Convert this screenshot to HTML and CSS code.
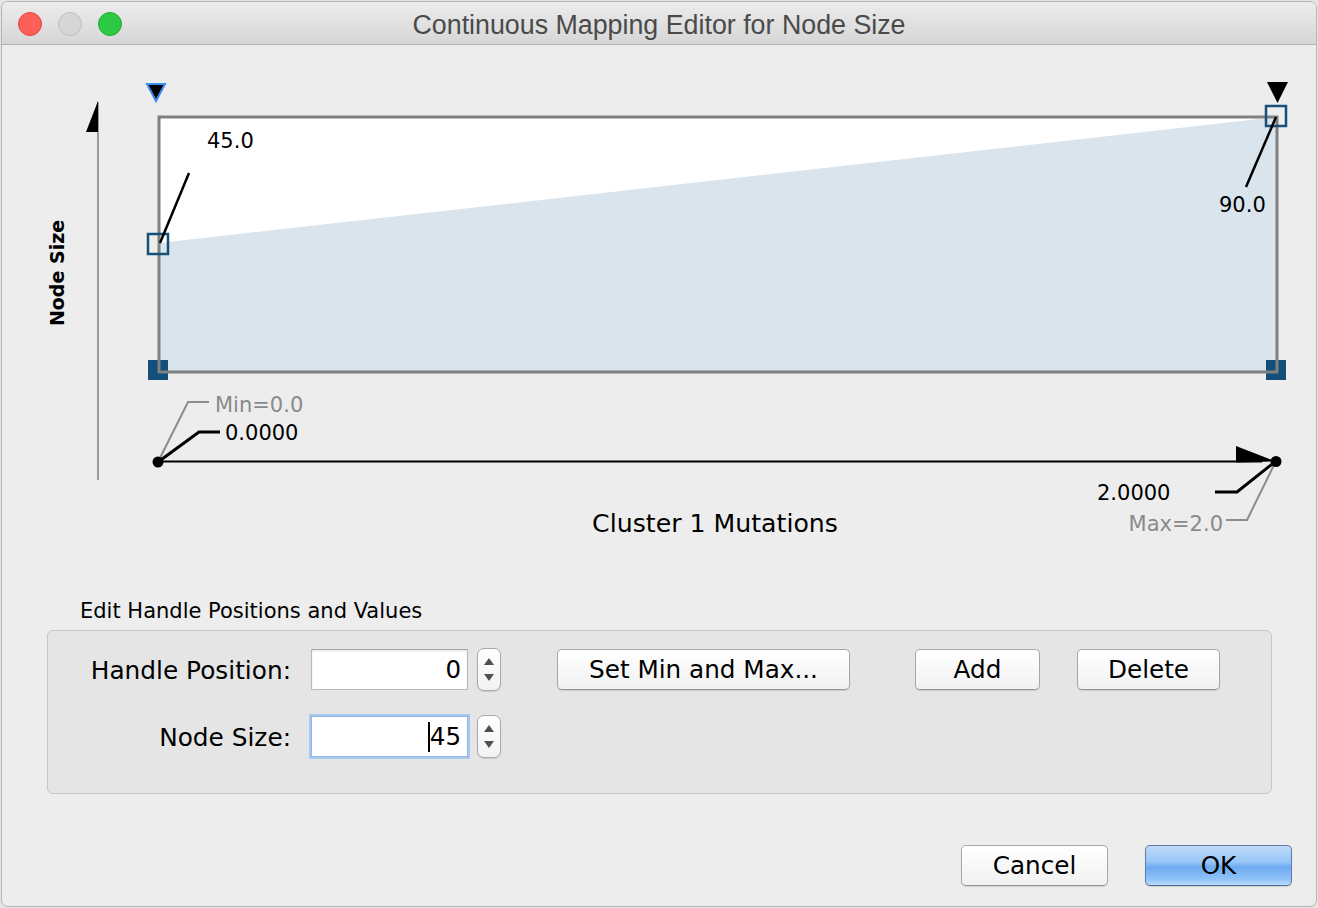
FILE: index.html
```html
<!DOCTYPE html>
<html>
<head>
<meta charset="utf-8">
<title>Continuous Mapping Editor for Node Size</title>
<link rel="stylesheet" href="styles.css">
</head>
<body>
<div class="window">
  <div class="titlebar">
    <div class="lights">
      <span class="light red"></span>
      <span class="light gray"></span>
      <span class="light green"></span>
    </div>
    <div class="title">Continuous Mapping Editor for Node Size</div>
    <div class="spacer"></div>
  </div>

  <svg class="chart" width="1314" height="550" viewBox="2 45 1314 550" xmlns="http://www.w3.org/2000/svg">
    <!-- top handle markers -->
    <polygon points="147,84 165,84 156,101" fill="#000" stroke="#3b8cf3" stroke-width="2" stroke-linejoin="miter"/>
    <polygon points="1267,82 1288,82 1277.5,103" fill="#000"/>

    <!-- vertical axis -->
    <line x1="98" y1="102" x2="98" y2="480" stroke="#9a9a9a" stroke-width="2"/>
    <polygon points="98,101 98,132 86,132" fill="#000"/>
    <text class="axis-y" transform="translate(64,273) rotate(-90)" text-anchor="middle">Node Size</text>

    <!-- plot area -->
    <rect x="159" y="117" width="1118" height="255" fill="#ffffff"/>
    <polygon points="159,243 1277,117 1277,372 159,372" fill="#d9e4ec"/>
    <rect x="148" y="360" width="20" height="20" fill="#12507b"/>
    <rect x="1266" y="360" width="20" height="20" fill="#12507b"/>
    <rect x="159" y="117" width="1118" height="255" fill="none" stroke="#808080" stroke-width="3"/>
    <rect x="148" y="234" width="20" height="20" fill="none" stroke="#164f77" stroke-width="2.5"/>
    <rect x="1266" y="106" width="20" height="20" fill="none" stroke="#164f77" stroke-width="2.5"/>

    <!-- value leaders -->
    <line x1="160" y1="243" x2="189" y2="173" stroke="#000" stroke-width="2.5"/>
    <text class="val" x="207" y="148">45.0</text>
    <line x1="1276" y1="117" x2="1246" y2="187" stroke="#000" stroke-width="2.5"/>
    <text class="val" x="1219" y="212">90.0</text>

    <!-- horizontal axis -->
    <line x1="158" y1="461.5" x2="1262" y2="461.5" stroke="#000" stroke-width="2"/>
    <polygon points="1236,446 1236,462.5 1276,461.5" fill="#000"/>
    <polyline points="158,462 188,402 209,402" fill="none" stroke="#8c8c8c" stroke-width="2"/>
    <text class="val minmax" x="215" y="412">Min=0.0</text>
    <polyline points="158,462 199,432 220,432" fill="none" stroke="#000" stroke-width="3"/>
    <text class="val" x="225" y="440">0.0000</text>
    <polyline points="1276,461 1237,492 1215,492" fill="none" stroke="#000" stroke-width="3"/>
    <text class="val" x="1097" y="500">2.0000</text>
    <polyline points="1276,461 1247,520 1226,520" fill="none" stroke="#8c8c8c" stroke-width="2"/>
    <text class="val minmax" x="1223" y="531" text-anchor="end">Max=2.0</text>
    <circle cx="158" cy="462" r="5.5" fill="#000"/>
    <circle cx="1276" cy="461.5" r="5.5" fill="#000"/>

    <text class="axis-x" x="715" y="532" text-anchor="middle">Cluster 1 Mutations</text>
  </svg>

  <div class="editor">
    <div class="editor-label">Edit Handle Positions and Values</div>
    <div class="panel">
      <div class="row">
        <div class="field-label">Handle Position:</div>
        <div class="input">0</div>
        <div class="spinner"><span class="up"></span><span class="down"></span></div>
        <button class="btn btn-setmin">Set Min and Max...</button>
        <button class="btn btn-add">Add</button>
        <button class="btn btn-delete">Delete</button>
      </div>
      <div class="row">
        <div class="field-label">Node Size:</div>
        <div class="input focused"><span class="caret"></span>45</div>
        <div class="spinner"><span class="up"></span><span class="down"></span></div>
      </div>
    </div>
  </div>

  <div class="footer">
    <button class="btn btn-footer">Cancel</button>
    <button class="btn btn-footer btn-ok">OK</button>
  </div>
</div>
</body>
</html>
```
FILE: styles.css
```css
* { box-sizing: border-box; }
html, body { margin: 0; padding: 0; }
body {
  background: #e4e4e4;
  width: 1318px;
  height: 908px;
  overflow: hidden;
  font-family: "DejaVu Sans", sans-serif;
}
.window {
  margin: 1px 0 0 1px;
  width: 1316px;
  height: 906px;
  background: #ededed;
  border: 1px solid #b4b4b4;
  border-radius: 7px;
  overflow: hidden;
}
.titlebar {
  height: 43px;
  border-bottom: 1px solid #b3b3b3;
  background: linear-gradient(#ececec, #d6d6d6);
  display: grid;
  grid-template-columns: 1fr auto 1fr;
  align-items: center;
}
.lights {
  display: flex;
  gap: 16px;
  padding-left: 16px;
  padding-top: 1px;
}
.light {
  width: 24px;
  height: 24px;
  border-radius: 50%;
  display: block;
}
.light.red { background: #fe5f58; border: 1px solid #e2463f; }
.light.gray { background: #d6d6d6; border: 1px solid #bebebe; }
.light.green { background: #2ec943; border: 1px solid #1fab2f; }
.title {
  font-family: "Liberation Sans", Arial, sans-serif;
  font-size: 26.8px;
  color: #4a4a4a;
  padding-top: 4px;
}
.chart { display: block; }
.chart text { font-family: "DejaVu Sans", sans-serif; }
.chart .val { font-size: 21px; fill: #000; }
.chart .minmax { fill: #8a8a8a; }
.chart .axis-y { font-size: 19px; font-weight: bold; fill: #000; }
.chart .axis-x { font-size: 25.2px; fill: #000; }

.editor { padding-left: 45px; }
.editor-label {
  font-size: 21px;
  line-height: 28px;
  padding-left: 33px;
  padding-top: 2px;
  margin-bottom: -2px;
  color: #000;
}
.panel {
  margin-top: 7px;
  width: 1225px;
  height: 164px;
  background: #e5e5e5;
  border: 1px solid #c8c8c8;
  border-radius: 6px;
  padding-top: 17px;
  display: flex;
  flex-direction: column;
  gap: 24px;
}
.row {
  display: flex;
  align-items: center;
  height: 43px;
}
.field-label {
  width: 243px;
  text-align: right;
  font-size: 24.8px;
  color: #000;
  padding-top: 1px;
}
.input {
  margin-left: 20px;
  width: 157px;
  height: 41px;
  background: #fff;
  border: 1px solid #b9b9b9;
  border-top-color: #a8a8a8;
  box-shadow: inset 0 1px 2px rgba(0,0,0,0.12);
  font-size: 24.5px;
  text-align: right;
  padding-right: 6px;
  line-height: 39px;
  color: #000;
  display: flex;
  justify-content: flex-end;
  align-items: center;
}
.input.focused {
  border: 1px solid #8fb5e4;
  box-shadow: 0 0 0 2px #a9c9f0;
}
.caret {
  display: inline-block;
  width: 2px;
  height: 30px;
  background: #000;
}
.spinner {
  margin-left: 9px;
  width: 24px;
  height: 43px;
  border: 1px solid #a9a9a9;
  border-radius: 7px;
  background: linear-gradient(#ffffff, #f2f2f2);
  box-shadow: 0 1px 1px rgba(0,0,0,0.12);
  display: flex;
  flex-direction: column;
  align-items: center;
  justify-content: space-between;
  padding: 9px 0 9px;
}
.spinner .up, .spinner .down {
  width: 0;
  height: 0;
  border-left: 5px solid transparent;
  border-right: 5px solid transparent;
}
.spinner .up { border-bottom: 7px solid #505050; }
.spinner .down { border-top: 7px solid #505050; }

.btn {
  font-family: "DejaVu Sans", sans-serif;
  font-size: 24.7px;
  color: #000;
  height: 41px;
  background: linear-gradient(#ffffff, #f1f1f1);
  border: 1px solid #a8a8a8;
  border-bottom-color: #939393;
  border-radius: 5px;
  box-shadow: 0 1px 1px rgba(0,0,0,0.12);
  padding: 0;
  line-height: 38px;
}
.btn-setmin { margin-left: 56px; width: 293px; }
.btn-add { margin-left: 65px; width: 125px; }
.btn-delete { margin-left: 37px; width: 143px; }

.footer {
  display: flex;
  justify-content: flex-end;
  gap: 37px;
  padding-right: 24px;
  margin-top: 51px;
}
.btn-footer { width: 147px; }
.btn-ok {
  background: linear-gradient(#bfdaf9 0%, #98c6f6 40%, #6eaaf1 55%, #8fc3f8 85%, #b8dcfd 100%);
  border: 1px solid #5e7ea9;
  border-bottom-color: #4e6c97;
}
```
